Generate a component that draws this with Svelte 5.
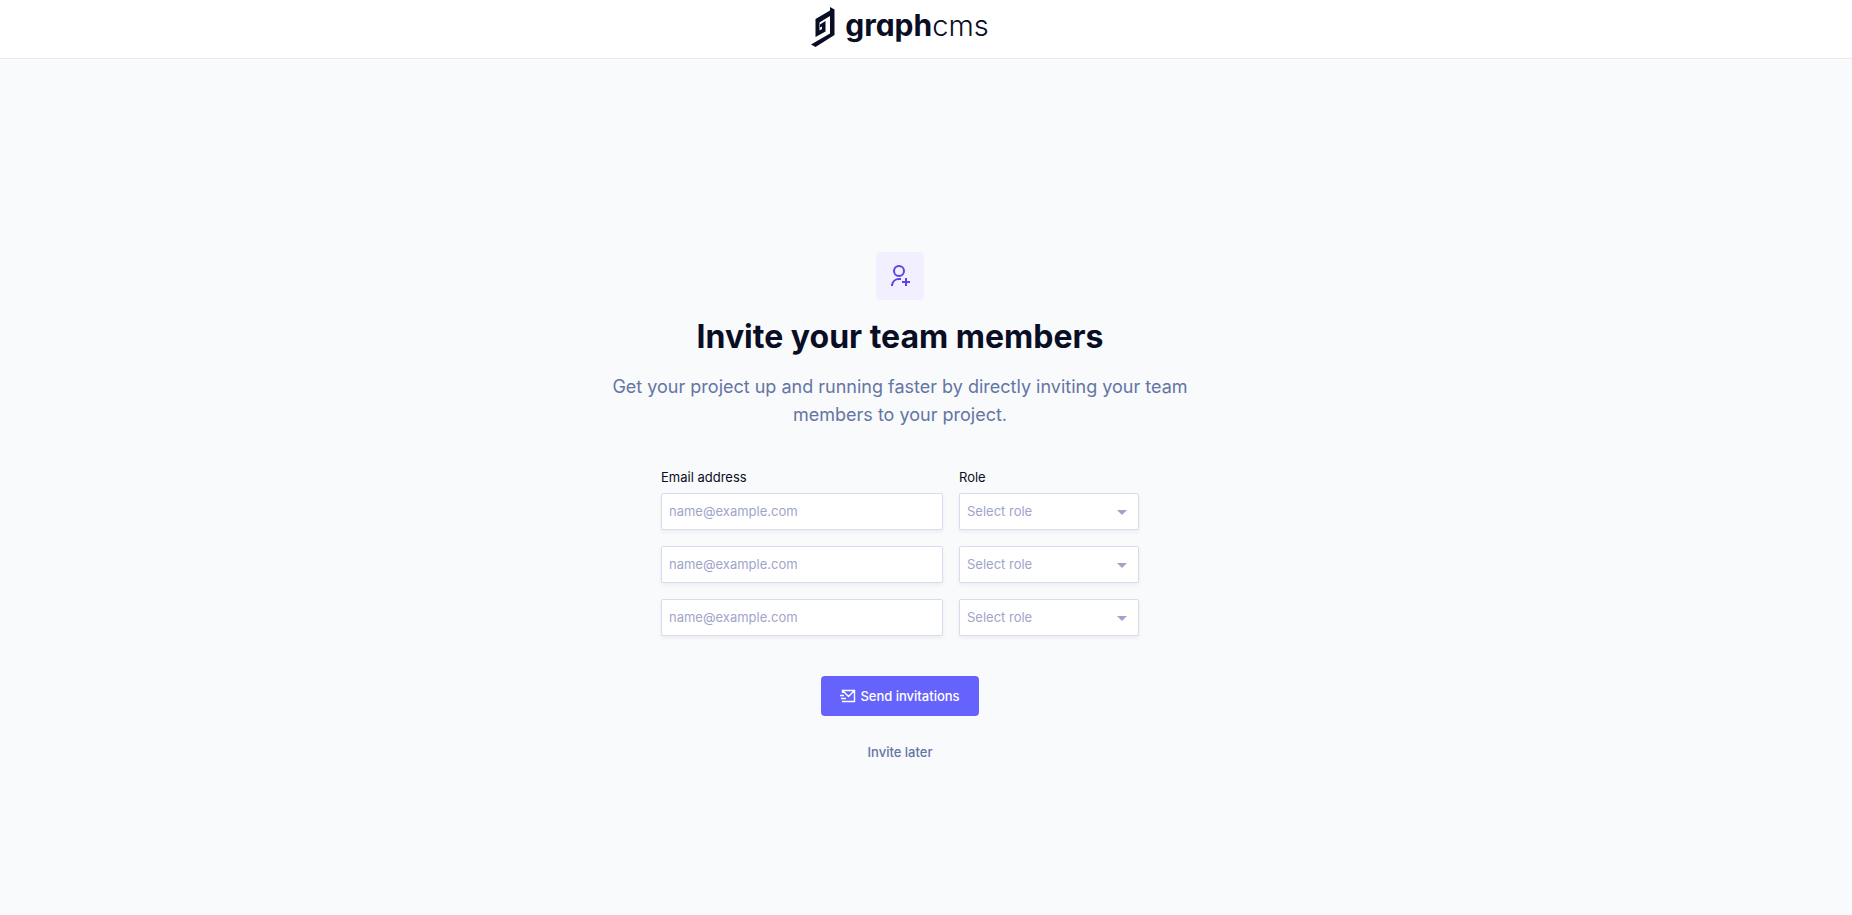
<script>
  const rows = [1, 2, 3];
</script>

<div class="page">
  <header>
    <div class="logo" role="img" aria-label="graphcms">
      <svg width="24" height="41" viewBox="0 0 24 41" aria-hidden="true">
        <path fill="#090e24" d="M19 0l4.500 2.500V28L4.500 40 0 37.500 19 26.500V9L8.500 15.500V23.500l2.500-1.500v-2.500l-2 1v-3l5.500-3.500v10.500L4.500 30V12L19 3.500z" />
      </svg>
      <span class="word"><b>graph</b><span>cms</span></span>
    </div>
  </header>

  <main>
    <div class="badge">
      <svg width="24" height="24" viewBox="0 0 24 24" fill="none" stroke="#5c43e5" stroke-width="2" aria-hidden="true">
        <circle cx="11" cy="7" r="5" />
        <path d="M4 22v-1a7 7 0 0 1 7-6h2M18 14v8M14 18h8" />
      </svg>
    </div>
    <h1>Invite your team members</h1>
    <p>Get your project up and running faster by directly inviting your team members to your project.</p>

    <form onsubmit={(e) => e.preventDefault()}>
      <div class="grid">
        <label for="email-1">Email address</label>
        <label for="role-1">Role</label>
        {#each rows as n}
          <input id="email-{n}" type="email" placeholder="name@example.com" aria-label="Email address" />
          <select id="role-{n}" aria-label="Role">
            <option>Select role</option>
          </select>
        {/each}
      </div>
      <button class="send" type="submit">
        <svg width="16" height="16" viewBox="0 0 16 16" fill="none" stroke="currentColor" stroke-width="1.400" aria-hidden="true">
          <path d="M2.500 5V2.500h12v11H2M2.500 2.500l6 6 6-6M0 7.500h4M1 10.500h5" />
        </svg>
        Send invitations
      </button>
      <button class="later" type="button">Invite later</button>
    </form>
  </main>
</div>

<style>
  :global(body) {
    background: #f8fafc;
  }
  .page {
    min-height: 100vh;
    display: flex;
    flex-direction: column;
    font-family: Inter, "Liberation Sans", sans-serif;
    color: #090e24;
  }
  header {
    height: 58px;
    padding-right: 52px;
    background: #fff;
    border-bottom: 1px solid #e8eaf1;
    display: flex;
    justify-content: center;
  }
  .logo {
    display: flex;
    gap: 10px;
    padding-top: 7px;
  }
  .word {
    font-size: 30px;
    line-height: 36px;
    font-feature-settings: "cv11";
    font-weight: 300;
  }
  .word b {
    font-weight: 700;
  }
  .word span {
    font-size: 29px;
  }
  main {
    flex: 1;
    padding: 193px 52px 40px 0;
    display: flex;
    flex-direction: column;
    align-items: center;
  }
  .badge {
    width: 48px;
    height: 48px;
    border-radius: 4px;
    background: #f2f0ff;
    display: flex;
    align-items: center;
    justify-content: center;
  }
  h1 {
    margin: 17px 0 16px;
    font-size: 32px;
    line-height: 40px;
    font-weight: 700;
  }
  p {
    margin: 0;
    max-width: 608px;
    font-size: 18px;
    line-height: 28px;
    text-align: center;
    color: #6475a3;
  }
  form {
    margin-top: 38px;
    display: flex;
    flex-direction: column;
    align-items: center;
  }
  .grid {
    display: grid;
    grid-template-columns: 282px 180px;
    gap: 16px;
  }
  label {
    font-size: 13px;
    line-height: 20px;
    margin-bottom: -10px;
  }
  input,
  select {
    box-sizing: border-box;
    width: 100%;
    height: 37px;
    padding: 0 7px 1px;
    border: 1px solid #d9dcee;
    border-radius: 2px;
    background: #fff;
    box-shadow: 0 2px 4px rgba(9, 14, 36, 0.06);
    font: 13px/20px Inter, "Liberation Sans", sans-serif;
    color: #a0a4cb;
  }
  input::placeholder {
    color: #a0a4cb;
  }
  select {
    appearance: none;
    background: #fff url("data:image/svg+xml,%3Csvg xmlns='http://www.w3.org/2000/svg' width='10' height='5'%3E%3Cpath fill='%239fa3cc' d='M0 0h10L5 5z'/%3E%3C/svg%3E") no-repeat right 11px top 16px;
  }
  button {
    border: 0;
    font: 500 13px/20px Inter, "Liberation Sans", sans-serif;
  }
  .send {
    margin-top: 40px;
    height: 40px;
    padding: 0 19px;
    display: flex;
    align-items: center;
    gap: 4px;
    border-radius: 4px;
    background: #6663fd;
    color: #fff;
  }
  .later {
    margin-top: 26px;
    padding: 0;
    background: none;
    color: #6475a3;
  }
</style>
